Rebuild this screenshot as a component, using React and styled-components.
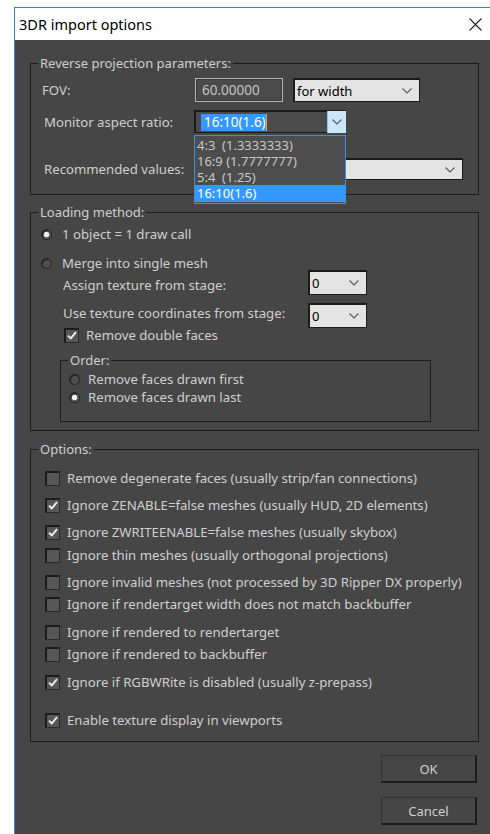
import React from 'react'
import styled, { createGlobalStyle } from 'styled-components'

const GlobalStyle = createGlobalStyle`
  html, body {
    margin: 0;
    background: #ffffff;
  }
  body {
    font-family: "Noto Sans", "Open Sans", sans-serif;
    font-size: 13.2px;
    color: #cfcfcf;
  }
`

const Window = styled.div`
  margin: 7px 0 0 14px;
  width: 476px;
  height: 827px;
  border-top: 1px solid #2b86d8;
  border-left: 1px solid #2b86d8;
  box-sizing: border-box;
  overflow: hidden;
  display: flex;
  flex-direction: column;
`

const TitleBar = styled.div`
  height: 32px;
  flex-shrink: 0;
  background: #ffffff;
  display: flex;
  align-items: center;
  justify-content: space-between;
  padding: 0 8px 0 4px;
`

const Title = styled.span`
  font-size: 14.5px;
  color: #000;
`

const Body = styled.div`
  flex: 1;
  background: #464646;
  padding: 15px 11px 0 15px;
  display: flex;
  flex-direction: column;
`

const Group = styled.fieldset`
  margin: ${p => p.mt || 0}px 0 0 ${p => p.ml || 0}px;
  padding: 0;
  min-width: 0;
  width: ${p => (p.w ? `${p.w}px` : 'auto')};
  box-sizing: border-box;
  border: 1px solid #1d1d1d;
`

const Legend = styled.legend`
  margin-left: 7px;
  padding: 0 2px;
  line-height: 16px;
  font-size: 13px;
  color: #cfcfcf;
`

const Content = styled.div`
  position: relative;
  display: flex;
  flex-direction: column;
  padding: ${p => p.pad};
`

const Row = styled.div`
  display: flex;
  align-items: center;
  height: ${p => p.h || 16}px;
  margin-top: ${p => p.mt || 0}px;
  white-space: nowrap;
`

const Label = styled.span`
  box-sizing: border-box;
  width: ${p => p.w}px;
  padding-left: ${p => p.indent || 0}px;
  margin-top: ${p => p.shift || 0}px;
  flex-shrink: 0;
`

const TextBox = styled.div`
  box-sizing: border-box;
  width: 88px;
  height: 24px;
  margin-left: 1px;
  border: 1px solid #b4b4b4;
  box-shadow: inset 0 0 0 1px #3a3a3a;
  background: #4b4b4b;
  color: #c4c4c4;
  display: flex;
  align-items: center;
  padding-left: 6px;
  font-size: 13.5px;
`

const Combo = styled.div`
  position: relative;
  box-sizing: border-box;
  width: ${p => p.w}px;
  height: ${p => p.h || 24}px;
  margin-left: ${p => p.ml || 0}px;
  display: flex;
  align-items: center;
  justify-content: space-between;
  background: ${p => (p.dark ? '#4b4b4b' : '#e3e3e3')};
  color: #000;
  border: 1px solid #1b1b1b;
  border-top-width: 2px;
  border-left-width: 2px;
  padding-left: 2px;
  font-size: 13px;
`

const Chevron = () => (
  <svg width="10" height="6" viewBox="0 0 10 6">
    <path d="M0.5 0.5 L5 5 L9.5 0.5" fill="none" stroke="#5a5a5a" strokeWidth="1.1" />
  </svg>
)

const ChevronSlot = styled.span`
  display: flex;
  align-items: center;
  padding-right: 7px;
`

const DropButton = styled.span`
  align-self: stretch;
  width: 18px;
  margin: -1px -1px -1px 0;
  background: #cde6f9;
  border-left: 1px solid #8fc2ea;
  display: flex;
  align-items: center;
  justify-content: center;
`

const Selected = styled.span`
  background: #3399ff;
  color: #fff;
  padding: 1px 0 1px 3px;
  margin-left: 3px;
  border-right: 1px solid #ff9a3c;
  line-height: 15px;
  font-size: 13.5px;
`

const ListBox = styled.ul`
  position: absolute;
  top: 100%;
  left: -2px;
  margin: 3px 0 0;
  padding: 1px 0;
  list-style: none;
  width: 152px;
  box-sizing: border-box;
  background: #4d4d4d;
  border: 1px solid #3c8fe2;
  z-index: 2;
`

const ListItem = styled.li`
  height: ${p => (p.active ? 17 : 16)}px;
  line-height: ${p => (p.active ? 17 : 16)}px;
  padding-left: 2px;
  white-space: pre;
  font-size: 13px;
  overflow: hidden;
  color: ${p => (p.active ? '#ffffff' : '#c8c8c8')};
  background: ${p => (p.active ? '#3399ff' : 'transparent')};
`

const RadioDot = styled.span`
  box-sizing: border-box;
  width: 11px;
  height: 11px;
  border-radius: 50%;
  flex-shrink: 0;
  margin: 0 ${p => p.gap || 10}px 0 ${p => p.indent || 0}px;
  border: 1px solid #222;
  background: ${p => (p.on ? 'radial-gradient(circle, #f2f2f2 0 2.5px, #5e5e5e 3px)' : '#4f4f4f')};
  box-shadow: inset 1px 1px 0 #262626;
`

const Check = styled.span`
  box-sizing: border-box;
  width: 15px;
  height: 15px;
  flex-shrink: 0;
  margin: 0 7px 0 ${p => p.indent || 0}px;
  background: #575757;
  border: 1px solid #2a2a2a;
  border-top: 2px solid #1c1c1c;
  border-left: 2px solid #1c1c1c;
  display: flex;
  align-items: center;
  justify-content: center;
`

const Tick = () => (
  <svg width="10" height="9" viewBox="0 0 10 9">
    <path d="M1 4.6 L3.8 7.4 L9 1.2" fill="none" stroke="#f4f4f4" strokeWidth="1.8" />
  </svg>
)

const Button = styled.button`
  align-self: flex-end;
  margin: ${p => p.mt}px 2px 0 0;
  width: 96px;
  height: 28px;
  box-sizing: border-box;
  background: #464646;
  border: 1px solid #333;
  border-right: 2px solid #1c1c1c;
  border-bottom: 2px solid #1c1c1c;
  color: #cfcfcf;
  font-family: inherit;
  font-size: 13px;
  padding: 0;
`

const CloseIcon = () => (
  <svg width="13" height="13" viewBox="0 0 13 13">
    <path d="M0.5 0.5 L12.5 12.5 M12.5 0.5 L0.5 12.5" stroke="#222" strokeWidth="1.1" />
  </svg>
)

const CheckRow = ({ mt, on, children }) => (
  <Row mt={mt}>
    <Check>{on && <Tick />}</Check>
    {children}
  </Row>
)

const options = [
  { mt: 13, on: false, text: 'Remove degenerate faces (usually strip/fan connections)' },
  { mt: 11, on: true, text: 'Ignore ZENABLE=false meshes (usually HUD, 2D elements)' },
  { mt: 11, on: true, text: 'Ignore ZWRITEENABLE=false meshes (usually skybox)' },
  { mt: 7, on: false, text: 'Ignore thin meshes (usually orthogonal projections)' },
  { mt: 11, on: false, text: 'Ignore invalid meshes (not processed by 3D Ripper DX properly)' },
  { mt: 6, on: false, text: 'Ignore if rendertarget width does not match backbuffer' },
  { mt: 12, on: false, text: 'Ignore if rendered to rendertarget' },
  { mt: 6, on: false, text: 'Ignore if rendered to backbuffer' },
  { mt: 12, on: true, text: 'Ignore if RGBWRite is disabled (usually z-prepass)' },
  { mt: 22, on: true, text: 'Enable texture display in viewports' },
]

const ratios = ['4:3  (1.3333333)', '16:9 (1.7777777)', '5:4  (1.25)', '16:10(1.6)']

export default function App() {
  return (
    <>
      <GlobalStyle />
      <Window>
        <TitleBar>
          <Title>3DR import options</Title>
          <CloseIcon />
        </TitleBar>
        <Body>
          <Group>
            <Legend>Reverse projection parameters:</Legend>
            <Content pad="7px 0 14px 11px">
              <Row h={24}>
                <Label w={152}>FOV:</Label>
                <TextBox>60.00000</TextBox>
                <Combo w={127} ml={10}>
                  for width
                  <ChevronSlot><Chevron /></ChevronSlot>
                </Combo>
              </Row>
              <Row h={23} mt={8}>
                <Label w={152} indent={2}>Monitor aspect ratio:</Label>
                <Combo w={152} h={23} dark>
                  <Selected>16:10(1.6)</Selected>
                  <DropButton><Chevron /></DropButton>
                  <ListBox>
                    {ratios.map((r, i) => (
                      <ListItem key={r} active={i === ratios.length - 1}>{r}</ListItem>
                    ))}
                  </ListBox>
                </Combo>
              </Row>
              <Row h={22} mt={25}>
                <Label w={152} indent={2}>Recommended values:</Label>
                <Combo w={269} h={22}>
                  <span />
                  <ChevronSlot><Chevron /></ChevronSlot>
                </Combo>
              </Row>
            </Content>
          </Group>

          <Group mt={9}>
            <Legend>Loading method:</Legend>
            <Content pad="6px 0 8px 10px">
              <Row>
                <RadioDot on />
                1 object = 1 draw call
              </Row>
              <Row mt={13}>
                <RadioDot />
                Merge into single mesh
              </Row>
              <Row h={25} mt={-1}>
                <Label w={267} indent={22} shift={4}>Assign texture from stage:</Label>
                <Combo w={59} h={25}>
                  0
                  <ChevronSlot><Chevron /></ChevronSlot>
                </Combo>
              </Row>
              <Row h={24} mt={8}>
                <Label w={267} indent={22} shift={-5}>Use texture coordinates from stage:</Label>
                <Combo w={59} h={25}>
                  0
                  <ChevronSlot><Chevron /></ChevronSlot>
                </Combo>
              </Row>
              <Row>
                <Check indent={23}><Tick /></Check>
                Remove double faces
              </Row>
              <Group mt={9} ml={19} w={371}>
                <Legend>Order:</Legend>
                <Content pad="3px 0 16px 8px">
                  <Row>
                    <RadioDot gap={8} />
                    Remove faces drawn first
                  </Row>
                  <Row mt={2}>
                    <RadioDot on gap={8} />
                    Remove faces drawn last
                  </Row>
                </Content>
              </Group>
            </Content>
          </Group>

          <Group mt={10}>
            <Legend>Options:</Legend>
            <Content pad="0 0 13px 14px">
              {options.map(o => (
                <CheckRow key={o.text} mt={o.mt} on={o.on}>{o.text}</CheckRow>
              ))}
            </Content>
          </Group>

          <Button mt={13}>OK</Button>
          <Button mt={14}>Cancel</Button>
        </Body>
      </Window>
    </>
  )
}
